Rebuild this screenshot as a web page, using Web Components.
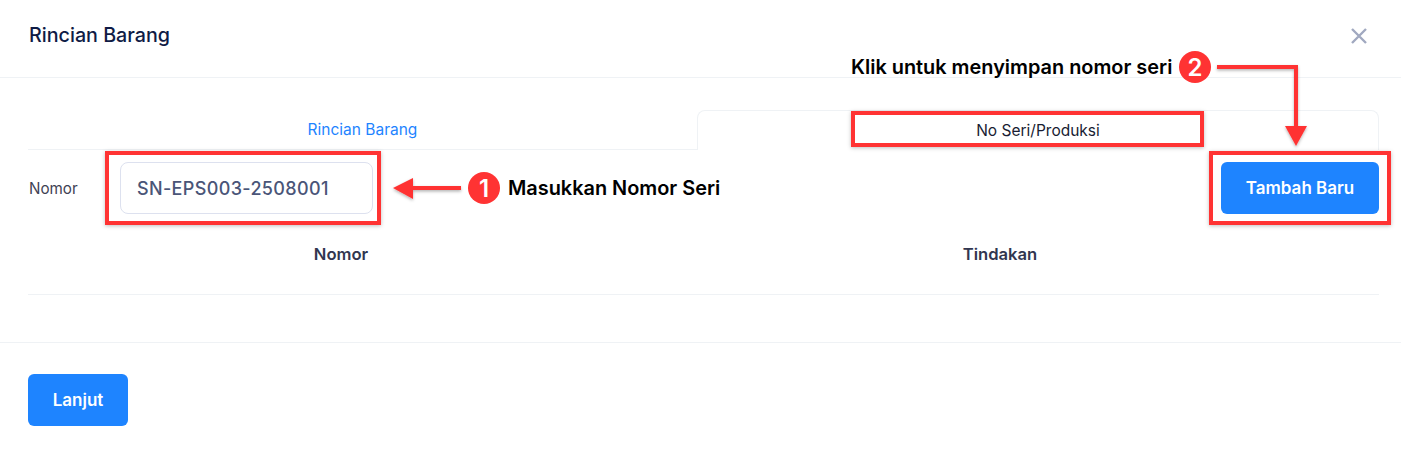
<!DOCTYPE html>
<html>
<head>
<meta charset="utf-8">
<style>
  html, body { margin: 0; padding: 0; background: #fff; }
  body { font-family: "Inter", "Noto Sans", sans-serif; width: 1401px; height: 452px; overflow: hidden; }
</style>
</head>
<body>
<item-modal></item-modal>
<script>
class BlueButton extends HTMLElement {
  constructor() {
    super();
    this.attachShadow({mode: "open"}).innerHTML = `
      <style>
        :host { display: inline-block; }
        button {
          display: block; height: 52px; width: var(--w, 100px); border: 0; border-radius: 6px;
          background: #1e84ff; color: #fff; font: 600 17px "Inter", sans-serif; padding: 0; cursor: pointer;
        }
      </style>
      <button><slot></slot></button>`;
  }
}
customElements.define("blue-button", BlueButton);

class ModalHeader extends HTMLElement {
  constructor() {
    super();
    this.attachShadow({mode: "open"}).innerHTML = `
      <style>
        :host { display: flex; align-items: center; justify-content: space-between; height: 77px;
          padding: 0 33px 0 29px; border-bottom: 1px solid #eff2f5; }
        h2 { margin: -7px 0 0; font: 500 19.7px "Inter", sans-serif; color: #0f1b45; }
        svg { display: block; margin-top: -5px; }
      </style>
      <h2><slot></slot></h2>
      <svg width="18" height="18" viewBox="0 0 18 18"><path d="M2 2 L16 16 M16 2 L2 16" stroke="#a1a9c0" stroke-width="2.4" fill="none"/></svg>`;
  }
}
customElements.define("modal-header", ModalHeader);

class TabBar extends HTMLElement {
  constructor() {
    super();
    this.attachShadow({mode: "open"}).innerHTML = `
      <style>
        :host { display: grid; grid-template-columns: 669px 682px; height: 40px; font-size: 15.5px; }
        div { display: flex; align-items: center; justify-content: center; box-sizing: border-box; }
        .off { color: #1e84ff; border-bottom: 1px solid #eff2f5; }
        .on { color: #181c32; border: 1px solid #eff2f5; border-bottom: 0; border-radius: 8px 8px 0 0; }
      </style>
      <div class="off">Rincian Barang</div>
      <div class="on">No Seri/Produksi</div>`;
  }
}
customElements.define("tab-bar", TabBar);

class SerialRow extends HTMLElement {
  constructor() {
    super();
    this.attachShadow({mode: "open"}).innerHTML = `
      <style>
        :host { display: flex; align-items: center; margin-top: 12px; height: 52px; }
        label { width: 92px; font-size: 15.2px; color: #3f4254; padding-left: 1px; box-sizing: border-box; }
        .field { width: 253px; height: 52px; box-sizing: border-box; border: 1px solid #dde1ef; border-radius: 8px;
          display: flex; align-items: center; padding-left: 16px; font: 500 18px "Inter", sans-serif; letter-spacing: .35px; color: #4a5578; }
        blue-button { margin-left: auto; --w: 158px; }
      </style>
      <label>Nomor</label>
      <div class="field">SN-EPS003-2508001</div>
      <blue-button>Tambah Baru</blue-button>`;
  }
}
customElements.define("serial-row", SerialRow);

class SerialTable extends HTMLElement {
  constructor() {
    super();
    this.attachShadow({mode: "open"}).innerHTML = `
      <style>
        :host { display: grid; grid-template-columns: 626px 1fr; height: 80px; border-bottom: 1px solid #eff2f5; }
        div { display: flex; justify-content: center; align-items: center; height: 80px; font: 600 16.6px "Inter", sans-serif; color: #31364f; }
        div + div { padding-right: 32px; margin-left: -1px; }
      </style>
      <div>Nomor</div>
      <div>Tindakan</div>`;
  }
}
customElements.define("serial-table", SerialTable);

class CallOuts extends HTMLElement {
  constructor() {
    super();
    this.attachShadow({mode: "open"}).innerHTML = `
      <style>
        :host { position: absolute; left: 0; top: 0; width: 1401px; height: 452px; pointer-events: none; }
        .box { position: absolute; box-sizing: border-box; border: 4px solid #ff3333; box-shadow: 0 1px 4px rgba(0,0,0,.25); }
        .num { position: absolute; width: 32px; height: 32px; border-radius: 50%; background: #ff3333; color: #fff;
          display: flex; align-items: center; justify-content: center; font: 600 24px "Inter", sans-serif; }
        .txt { position: absolute; font: 600 19.9px "Inter", sans-serif; color: #000; white-space: nowrap; line-height: 24px; }
        svg { position: absolute; left: 0; top: 0; overflow: visible; }
      </style>
      <svg width="1401" height="452">
        <defs><filter id="s" x="-20%" y="-20%" width="140%" height="140%"><feDropShadow dx="0" dy="1.5" stdDeviation="1.5" flood-color="#000" flood-opacity=".3"/></filter></defs>
        <g filter="url(#s)" fill="#ff3333">
          <path d="M412 186H461V190H412Z"/>
          <path d="M393 188L413 178V199Z"/>
          <path d="M1217 65H1298V128H1294V69H1217Z"/>
          <path d="M1285 126H1307L1296 146Z"/>
        </g>
      </svg>
      <div class="box" style="left:105px;top:151px;width:276px;height:74px"></div>
      <div class="box" style="left:851px;top:111px;width:353px;height:36px"></div>
      <div class="box" style="left:1209px;top:151px;width:182px;height:74px"></div>
      <div class="num" style="left:468px;top:172px">1</div>
      <div class="num" style="left:1179px;top:51px">2</div>
      <div class="txt" style="left:508px;top:176px">Masukkan Nomor Seri</div>
      <div class="txt" style="left:851px;top:55px">Klik untuk menyimpan nomor seri</div>`;
  }
}
customElements.define("call-outs", CallOuts);

class ItemModal extends HTMLElement {
  constructor() {
    super();
    this.attachShadow({mode: "open"}).innerHTML = `
      <style>
        :host { display: block; position: relative; width: 1401px; height: 452px; background: #fff; }
        .body { padding: 32px 22px 0 28px; height: 232px; border-bottom: 1px solid #eff2f5; }
        .foot { padding: 31px 28px 0; }
      </style>
      <modal-header>Rincian Barang</modal-header>
      <div class="body">
        <tab-bar></tab-bar>
        <serial-row></serial-row>
        <serial-table></serial-table>
      </div>
      <div class="foot"><blue-button>Lanjut</blue-button></div>
      <call-outs></call-outs>`;
  }
}
customElements.define("item-modal", ItemModal);
</script>
</body>
</html>
